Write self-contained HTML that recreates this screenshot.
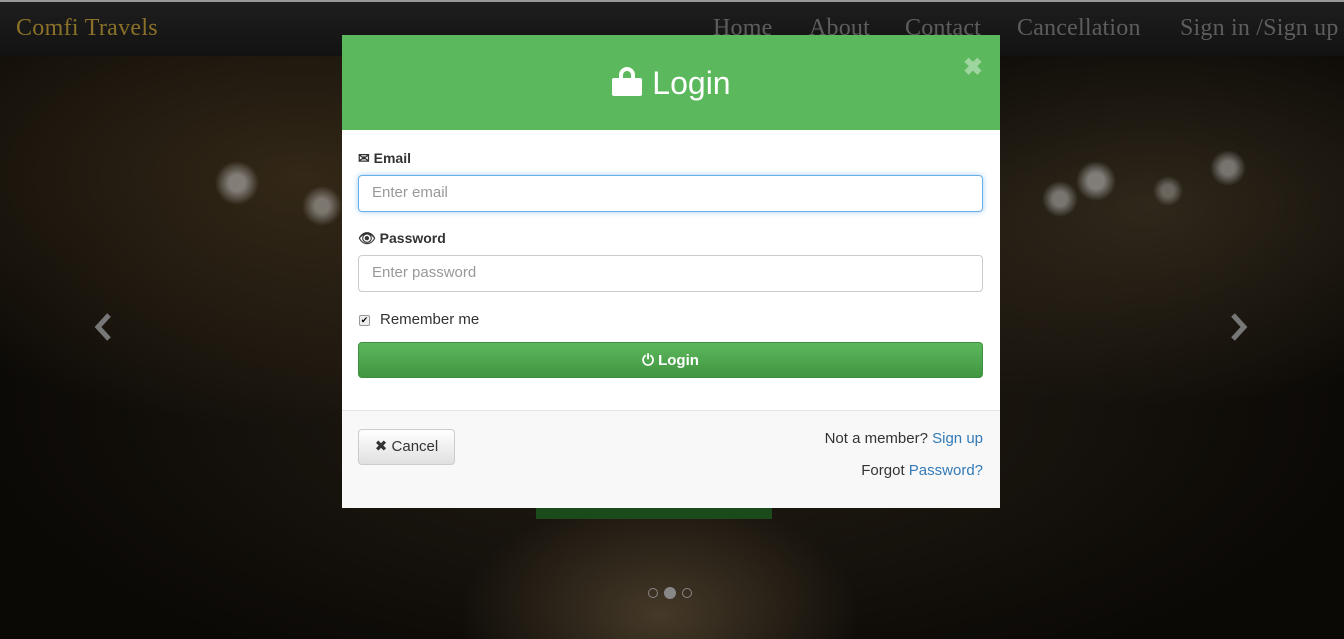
<!DOCTYPE html>
<html><head><meta charset="utf-8"><style>
*{box-sizing:border-box;margin:0;padding:0}
body{width:1344px;height:639px;overflow:hidden;position:relative;font-family:"Liberation Sans",sans-serif;background:#0b0906}
.bg{position:absolute;left:0;top:56px;width:1344px;height:583px;
background:
radial-gradient(circle at 237px 127px,rgba(200,200,200,.55) 0 8px,transparent 22px),
radial-gradient(circle at 322px 150px,rgba(200,200,200,.5) 0 7px,transparent 20px),
radial-gradient(circle at 1096px 125px,rgba(200,200,200,.55) 0 8px,transparent 20px),
radial-gradient(circle at 1060px 143px,rgba(200,200,200,.5) 0 7px,transparent 18px),
radial-gradient(circle at 1228px 112px,rgba(200,200,200,.5) 0 7px,transparent 18px),
radial-gradient(circle at 1168px 135px,rgba(200,200,200,.4) 0 6px,transparent 15px),
radial-gradient(ellipse 200px 120px at 660px 560px,rgba(120,100,70,.5),transparent),
radial-gradient(ellipse 500px 250px at 300px 120px,rgba(90,70,40,.5),transparent),
radial-gradient(ellipse 400px 200px at 1150px 150px,rgba(90,75,50,.45),transparent),
radial-gradient(ellipse 700px 300px at 672px 350px,#241d14,#0b0906);}
.nav{position:absolute;left:0;top:0;width:1344px;height:56px;background:linear-gradient(#1e1e1e,#121212);border-top:2px solid #999;font-family:"Liberation Serif",serif}
.brand{position:absolute;left:16px;top:13px;color:#8b7128;font-size:24px;letter-spacing:.3px}
.nav a{position:absolute;top:13px;color:#5d5d5d;font-size:24px;letter-spacing:.2px}
.chev{position:absolute;top:312px}
.modal{position:absolute;left:342px;top:35px;width:658px;height:473px;background:#fff}
.hd{height:95px;background:#5cb85c;color:#fff;text-align:center;font-size:32px;padding-top:30px;position:relative}
.x{position:absolute;right:17px;top:18px;font-size:24px;color:#9fd59f;font-weight:bold}
label{position:absolute;left:16px;font-size:14px;font-weight:bold;color:#333}
.in{position:absolute;left:16px;width:625px;height:37px;border:1px solid #ccc;border-radius:4px;font-size:15px;color:#999;padding:8px 13px}
.btn{position:absolute;left:16px;top:307px;width:625px;height:36px;border-radius:4px;background:linear-gradient(#5cb85c,#419641);border:1px solid #3e8f3e;color:#fff;font-weight:bold;font-size:15px;text-align:center;line-height:36px}
.ft{position:absolute;left:0;top:375px;width:658px;height:98px;background:#f8f8f8;border-top:1px solid #e5e5e5;font-size:15px;color:#333}
.cancel{position:absolute;left:16px;top:18px;width:97px;height:36px;border:1px solid #ccc;border-radius:4px;background:linear-gradient(#fff,#e0e0e0);text-align:center;line-height:34px}
.ft a{color:#337ab7;text-decoration:none}
</style></head><body>
<div class="bg"></div>
<div style="position:absolute;left:536px;top:505px;width:236px;height:14px;background:#1b4a1b"></div>
<div class="nav"><span class="brand">Comfi Travels</span>
<a style="left:713px">Home</a><a style="left:809px">About</a><a style="left:905px">Contact</a><a style="left:1017px">Cancellation</a><a style="left:1180px">Sign in /Sign up</a></div>
<svg class="chev" style="left:92px" width="22" height="30" viewBox="0 0 22 30"><path d="M17 3L6 15l11 12" fill="none" stroke="#777" stroke-width="5"/></svg>
<svg class="chev" style="left:1228px" width="22" height="30" viewBox="0 0 22 30"><path d="M5 3l11 12L5 27" fill="none" stroke="#777" stroke-width="5"/></svg>
<div style="position:absolute;left:648px;top:588px;width:10px;height:10px;border:1px solid #888;border-radius:50%"></div>
<div style="position:absolute;left:664px;top:587px;width:12px;height:12px;background:#888;border-radius:50%"></div>
<div style="position:absolute;left:682px;top:588px;width:10px;height:10px;border:1px solid #888;border-radius:50%"></div>
<div class="modal">
<div class="hd"><svg width="32" height="32" viewBox="0 0 32 32" style="vertical-align:-3px"><path d="M10 14V10a6 6 0 0 1 12 0v4" fill="none" stroke="#fff" stroke-width="4"/><rect x="1" y="13" width="30" height="18" rx="2" fill="#fff"/></svg> Login<span class="x">✖</span></div>
<label style="top:115px">✉ Email</label>
<div class="in" style="top:140px;border-color:#66afe9;box-shadow:0 0 6px rgba(102,175,233,.6)">Enter email</div>
<label style="top:195px">👁 Password</label>
<div class="in" style="top:220px">Enter password</div>
<div style="position:absolute;left:17px;top:280px;width:11px;height:11px;border:1px solid #999;border-radius:2px;font-size:9px;line-height:9px;text-align:center;background:#eee">✔</div>
<div style="position:absolute;left:38px;top:276px;font-size:15px;color:#333">Remember me</div>
<div class="btn">⏻ Login</div>
<div class="ft"><div class="cancel">✖ Cancel</div>
<div style="position:absolute;right:17px;top:19px">Not a member? <a>Sign up</a></div>
<div style="position:absolute;right:17px;top:51px">Forgot <a>Password?</a></div></div>
</div>
</body></html>
